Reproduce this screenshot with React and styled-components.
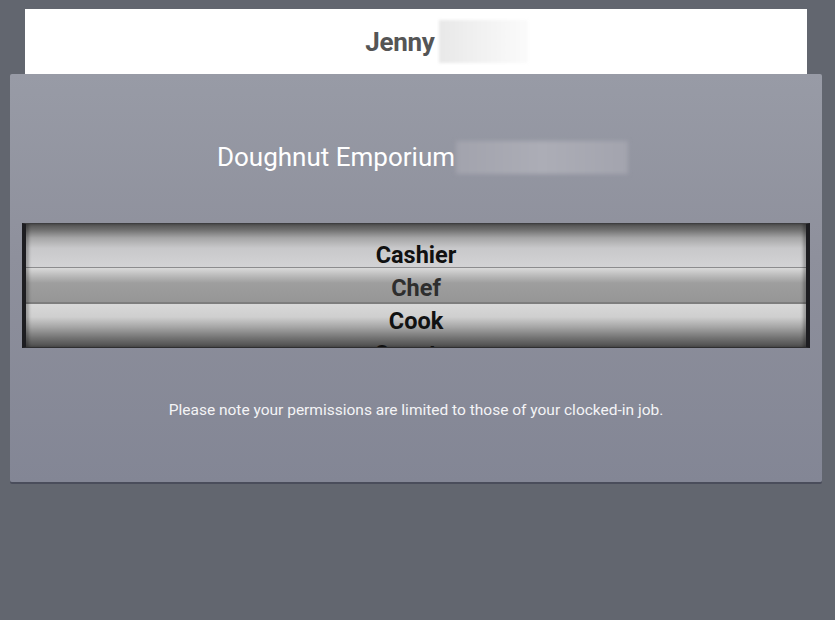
import React from 'react';
import styled, { createGlobalStyle } from 'styled-components';

const jobs = ['Cashier', 'Chef', 'Cook', 'Counter'];
const SELECTED = 'Chef';

const GlobalStyle = createGlobalStyle`
  html, body {
    margin: 0;
    padding: 0;
    background: #62666f;
    font-family: Roboto, "Liberation Sans", sans-serif;
  }
`;

const Screen = styled.div`
  width: 835px;
  height: 620px;
  padding-top: 9px;
  box-sizing: border-box;
  background: #62666f;
  overflow: hidden;
`;

const Header = styled.div`
  margin: 0 28px 0 25px;
  height: 65px;
  background: #ffffff;
  display: flex;
  align-items: center;
  justify-content: center;
  padding-left: 61px;
  box-sizing: border-box;
`;

const Name = styled.span`
  font-size: 26px;
  font-weight: 700;
  color: #555555;
  letter-spacing: -0.3px;
`;

// hidden surname / store suffix
const Redacted = styled.span`
  display: inline-block;
  width: ${p => p.$w}px;
  height: ${p => p.$h}px;
  margin-left: ${p => p.$gap}px;
  background: ${p => p.$bg};
  filter: blur(${p => p.$blur}px);
`;

const Dialog = styled.div`
  margin: 0 13px 0 10px;
  height: 408px;
  box-sizing: border-box;
  border-radius: 2px;
  background: linear-gradient(to bottom, #989ba6 0%, #8e909c 45%, #838695 100%);
  box-shadow: 0 2px 0 #4a4d5b;
  padding: 68px 12px 0;
  display: flex;
  flex-direction: column;
`;

const Title = styled.div`
  display: flex;
  align-items: center;
  justify-content: center;
  padding-left: 13px;
  height: 30px;
  font-size: 26px;
  color: #ffffff;
`;

const Picker = styled.div`
  margin-top: 51px;
  height: 125px;
  box-sizing: border-box;
  border-top: 1px solid #3e3e40;
  border-bottom: 1px solid #2e2e30;
  border-left: 4px solid #1d1d21;
  border-right: 4px solid #1d1d21;
  box-shadow: inset 4px 0 3px -1px rgba(0, 0, 0, 0.25), inset -4px 0 3px -1px rgba(0, 0, 0, 0.25);
  overflow: hidden;
  padding-top: 15px;
  background: linear-gradient(
    to bottom,
    #505050 0px,
    #707070 6px,
    #a6a6a7 14px,
    #c8c8ca 24px,
    #d3d3d5 43px,
    #8c8c8e 43px,
    #8c8c8e 44px,
    #dadada 44px,
    #bdbdbd 51px,
    #9e9e9e 59px,
    #969696 78px,
    #7d7d7d 78px,
    #7d7d7d 80px,
    #d8d8d8 80px,
    #cfcfcf 93px,
    #a6a6a6 103px,
    #727272 114px,
    #4c4c4c 123px
  );
`;

const Item = styled.div`
  height: 33px;
  line-height: 33px;
  text-align: center;
  font-size: 23.5px;
  font-weight: 700;
  color: ${p => (p.$selected ? '#2e2e2e' : '#111111')};
`;

const Note = styled.div`
  margin-top: 52px;
  line-height: 20px;
  text-align: center;
  font-size: 15.5px;
  color: #f4f4f6;
`;

export default function App() {
  return (
    <>
      <GlobalStyle />
      <Screen>
        <Header>
          <Name>Jenny</Name>
          <Redacted $w={89} $h={43} $gap={4} $blur={1.5}
            $bg="linear-gradient(to right, #e8e8e8 0%, #f0f0f0 40%, #fbfbfb 100%)" />
        </Header>
        <Dialog>
          <Title>
            Doughnut Emporium
            <Redacted $w={172} $h={33} $gap={1} $blur={2}
              $bg="linear-gradient(to right, #a2a3ad 0%, #acadb6 50%, #a3a4ae 100%)" />
          </Title>
          <Picker>
            {jobs.map(job => (
              <Item key={job} $selected={job === SELECTED}>{job}</Item>
            ))}
          </Picker>
          <Note>Please note your permissions are limited to those of your clocked-in job.</Note>
        </Dialog>
      </Screen>
    </>
  );
}
